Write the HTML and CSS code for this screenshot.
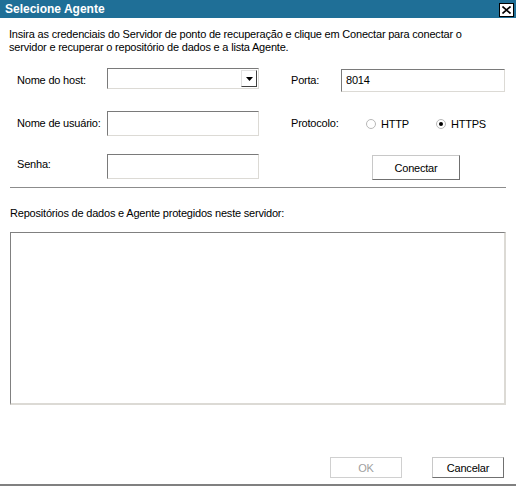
FILE: index.html
```html
<!DOCTYPE html>
<html lang="pt">
  <head>
    <meta charset="UTF-8" />
    <title>Selecione Agente</title>
    <link rel="stylesheet" href="styles.css">
  </head>
  <body>
    <div class="window">
      <div class="titlebar">
        <span class="title">Selecione Agente</span>
        <span class="close">
          <svg width="9" height="8" viewBox="0 0 9 8">
            <path d="M0.5 0.5 L8.5 7.5 M8.5 0.5 L0.5 7.5" stroke="#000" stroke-width="1.6" fill="none" />
          </svg>
        </span>
      </div>

      <div class="content">
        <p class="intro">Insira as credenciais do Servidor de ponto de recuperação e clique em Conectar para conectar o servidor e recuperar o repositório de dados e a lista Agente.</p>

        <div class="form">
          <label class="lbl">Nome do host:</label>
          <div class="combo">
            <span class="combo-btn">
              <svg width="7" height="4" viewBox="0 0 7 4"><path d="M0 0 H7 L3.5 4 Z" fill="#000" /></svg>
            </span>
          </div>
          <span></span>
          <label class="lbl">Porta:</label>
          <div class="field port">8014</div>

          <label class="lbl">Nome de usuário:</label>
          <div class="field"></div>
          <span></span>
          <label class="lbl">Protocolo:</label>
          <div class="radios">
            <span class="radio"><span class="dot"></span>HTTP</span>
            <span class="radio checked"><span class="dot"></span>HTTPS</span>
          </div>

          <label class="lbl senha">Senha:</label>
          <div class="field"></div>
          <span></span>
          <span></span>
          <div class="btn-cell"><button class="btn connect">Conectar</button></div>
        </div>

        <div class="sep"></div>

        <p class="list-label">Repositórios de dados e Agente protegidos neste servidor:</p>
        <div class="listbox"></div>

        <div class="actions">
          <button class="btn ok" disabled>OK</button>
          <button class="btn cancel">Cancelar</button>
        </div>
      </div>
    </div>
  </body>
</html>
```

FILE: styles.css
```css
body {
  margin: 0;
  padding: 0;
  background: #fff;
  font-family: "Liberation Sans", Arial, sans-serif;
  font-size: 11px;
  letter-spacing: -0.2px;
  color: #000;
}

.window {
  width: 516px;
  height: 486px;
  box-sizing: border-box;
  border-bottom: 2px solid #808080;
  background: #fff;
}

.titlebar {
  height: 18px;
  background-color: #1f6f97;
  display: flex;
  align-items: center;
  justify-content: space-between;
  padding: 0 2px 0 5px;
}

.title {
  color: #fff;
  font-weight: bold;
  font-size: 12px;
  letter-spacing: 0;
}

.close {
  width: 13px;
  height: 12px;
  background: #fff;
  border: 1px solid #000;
  display: flex;
  align-items: center;
  justify-content: center;
  margin-top: 1px;
}

.content {
  padding: 0 10px 0 9px;
}

.intro {
  margin: 10px 0 0;
  line-height: 13px;
  width: 475px;
}

.form {
  display: grid;
  grid-template-columns: 90px 152px 32px 50px 164px;
  grid-template-rows: 24px 24px 24px;
  row-gap: 19px;
  margin: 14px 0 0 8px;
}

.lbl {
  align-self: center;
  white-space: nowrap;
}

.lbl.senha {
  align-self: start;
  padding-top: 4px;
}

.combo {
  position: relative;
  height: 21px;
  box-sizing: border-box;
  border: 1px solid;
  border-color: #7a7a7a #dcdad5 #dcdad5 #7a7a7a;
}

.combo-btn {
  position: absolute;
  right: 1px;
  top: 1px;
  width: 16px;
  height: 17px;
  box-sizing: border-box;
  border: 1px solid;
  border-color: #e0e0e0 #404040 #404040 #e0e0e0;
  background: #fff;
  display: flex;
  align-items: center;
  justify-content: center;
}

.field {
  height: 25px;
  box-sizing: border-box;
  border: 1px solid;
  border-color: #7a7a7a #dcdad5 #dcdad5 #7a7a7a;
}

.field.port {
  height: 23px;
  margin-top: 1px;
  padding: 4px 0 0 4px;
}

.radios {
  display: flex;
  align-items: center;
  padding-left: 25px;
  gap: 27px;
  margin-top: 2px;
}

.radio {
  display: flex;
  align-items: center;
  gap: 5px;
}

.radio .dot {
  width: 10px;
  height: 10px;
  box-sizing: border-box;
  border-radius: 50%;
  border: 1px solid #b8b8b8;
  display: flex;
  align-items: center;
  justify-content: center;
}

.radio.checked .dot::after {
  content: "";
  width: 4px;
  height: 4px;
  border-radius: 50%;
  background: #000;
}

.btn-cell {
  padding-left: 31px;
}

.btn {
  font-family: "Liberation Sans", Arial, sans-serif;
  font-size: 11px;
  letter-spacing: -0.2px;
  background: #fff;
  border: 1px solid;
  border-color: #c8c8c8 #707070 #707070 #c8c8c8;
  padding: 0;
  color: #000;
}

.connect {
  width: 88px;
  height: 25px;
  margin-top: 1px;
}

.sep {
  height: 1px;
  background: #8c8c8c;
  margin: 9px 0 0 1px;
}

.list-label {
  margin: 19px 0 0 1px;
  line-height: 13px;
}

.listbox {
  height: 173px;
  margin: 12px 0 0 1px;
  box-sizing: border-box;
  border: 1px solid;
  border-width: 1px 2px 2px 1px;
  border-color: #808080 #dcdad5 #dcdad5 #808080;
}

.actions {
  display: flex;
  justify-content: flex-end;
  gap: 30px;
  margin: 52px 2px 0 0;
}

.ok {
  width: 72px;
  height: 21px;
  color: #a0a0a0;
  border-color: #d0d0d0;
}

.cancel {
  width: 72px;
  height: 21px;
}
```
